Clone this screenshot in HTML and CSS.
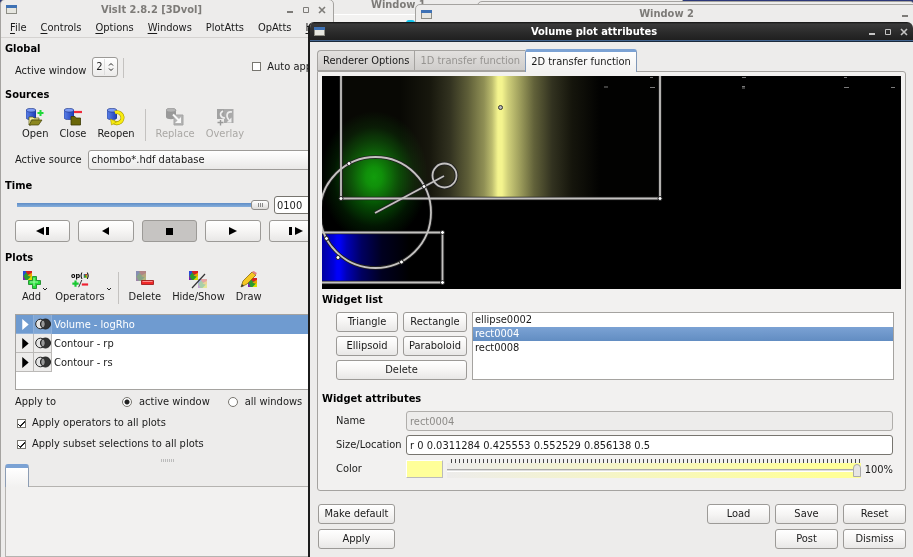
FILE: index.html
```html
<!DOCTYPE html>
<html lang="en">
<head>
	<meta charset="utf-8">
	<title>VisIt 2.8.2 [3Dvol]</title>
	<link rel="stylesheet" href="styles.css">
</head>
<body>
<!-- shared symbols -->
<svg class="defs" aria-hidden="true">
	<defs>
		<linearGradient id="blueCyl"><stop offset="0" stop-color="#5a80e8"/><stop offset="1" stop-color="#1c3cb8"/></linearGradient>
		<symbol id="cube" viewBox="0 0 10 10">
			<rect width="10" height="10" fill="#2a9a30"/>
			<path d="M0 0h5L0 6z" fill="#2848d8"/>
			<path d="M3 0h7v3L5 4z" fill="#d82020"/>
			<path d="M10 2v5L5 5z" fill="#f0a000"/>
			<path d="M10 5v5H5z" fill="#d8e000"/>
			<path d="M0 5l3 5H0z" fill="#7a20b0"/>
		</symbol>
		<symbol id="db" viewBox="0 0 10 12">
			<path d="M0 2v7.500c0 3 10 3 10 0V2z" fill="url(#blueCyl)" stroke="#1a2f80" stroke-width=".6"/>
			<ellipse cx="5" cy="2.200" rx="4.700" ry="1.900" fill="#7d9cf4" stroke="#1a2f80" stroke-width=".6"/>
		</symbol>
		<symbol id="win" viewBox="0 0 11 9">
			<rect x=".5" y=".5" width="10" height="8" fill="#e6e6e0" stroke="#8d8d85"/>
			<rect width="11" height="3" fill="#3f72b4"/>
		</symbol>
		<symbol id="minus" viewBox="0 0 8 8"><path d="M1 6h6" stroke="currentColor" stroke-width="2"/></symbol>
		<symbol id="square" viewBox="0 0 8 8"><path d="M1.500 1.500h5v5h-5z" fill="none" stroke="currentColor"/></symbol>
		<symbol id="cross" viewBox="0 0 8 8"><path d="M1 1l6 6m0-6l-6 6" stroke="currentColor" stroke-width="1.600"/></symbol>
		<symbol id="venn" viewBox="0 0 16 12">
			<circle cx="5.500" cy="6" r="4.800" fill="#e4e4e4" stroke="#222"/>
			<circle cx="10.500" cy="6" r="5" fill="#333" stroke="#222"/>
			<path d="M8 1.900a5 5 0 0 1 0 8.200a5 5 0 0 1 0-8.200z" fill="#999" stroke="#222" stroke-width=".6"/>
		</symbol>
	</defs>
</svg>

<div class="desktop">
	<div class="window win-one">
		<div class="titlebar"><h2>Window 1</h2></div>
		<div class="win-tools"><span class="chip"></span></div>
	</div>
	<div class="window win-back"></div>
	<div class="window win-two">
		<div class="titlebar">
			<svg class="win-icon"><use href="#win"/></svg>
			<h2>Window 2</h2>
			<button class="wb" aria-label="Minimize Window 2"><svg><use href="#minus"/></svg></button>
		</div>
	</div>

	<!-- main control window -->
	<main class="window main-win">
		<div class="titlebar">
			<svg class="win-icon"><use href="#win"/></svg>
			<h1>VisIt 2.8.2 [3Dvol]</h1>
			<div class="wbs">
				<button class="wb" aria-label="Minimize"><svg><use href="#minus"/></svg></button>
				<button class="wb" aria-label="Maximize"><svg><use href="#square"/></svg></button>
				<button class="wb" aria-label="Close"><svg><use href="#cross"/></svg></button>
			</div>
		</div>
		<nav class="menubar">
			<a href="#file"><u>F</u>ile</a>
			<a href="#controls"><u>C</u>ontrols</a>
			<a href="#options"><u>O</u>ptions</a>
			<a href="#windows"><u>W</u>indows</a>
			<a href="#plotatts">PlotAtts</a>
			<a href="#opatts">OpAtts</a>
			<a href="#help"><u>H</u>elp</a>
		</nav>

		<section class="group">
			<h3>Global</h3>
			<div class="global-row">
				<label for="activeWin" class="low">Active window</label>
				<span class="spin">
					<input id="activeWin" type="text" value="2">
					<svg viewBox="0 0 6 10"><path d="M1 3.500l2-2 2 2M1 6.500l2 2 2-2" fill="none" stroke="#222"/></svg>
				</span>
				<i class="vline"></i>
				<label class="check auto"><input type="checkbox">Auto apply</label>
			</div>
		</section>

		<section class="group">
			<h3>Sources</h3>
			<div class="toolbar">
				<button class="tool">
					<svg viewBox="0 0 18 18"><use href="#db" x="0" y="0" width="10" height="12"/>
						<path d="M3 9h4l1 1h5v2H5v5H3z" fill="#f3eda0" stroke="#55550a" stroke-width=".7"/>
						<path d="M3 17l3-5h10l-3.500 5z" fill="#8c8820" stroke="#44440a" stroke-width=".7"/>
						<path d="M14.500 2v6M11.500 5h6" stroke="#1fd83a" stroke-width="2"/></svg>
					Open
				</button>
				<button class="tool">
					<svg viewBox="0 0 18 18"><use href="#db" x="0" y="0" width="10" height="12"/>
						<path d="M7 8.500h4l1 1.500h4.500v7H7z" fill="#6b6708" stroke="#3c3a04" stroke-width=".8"/>
						<path d="M10 4h8" stroke="#f02a3a" stroke-width="2.200"/></svg>
					Close
				</button>
				<button class="tool">
					<svg viewBox="0 0 18 18"><use href="#db" x="0" y="0" width="10" height="12"/>
						<path d="M8 4.500a5.500 5.500 0 1 1-2 9" fill="none" stroke="#a89800" stroke-width="4"/>
						<path d="M8 4.500a5.500 5.500 0 1 1-2 9" fill="none" stroke="#f8ec10" stroke-width="2.800"/>
						<path d="M3.500 11l1 6 5-3z" fill="#f8ec10" stroke="#a89800" stroke-width=".6"/></svg>
					Reopen
				</button>
				<i class="vline"></i>
				<button class="tool" disabled>
					<svg viewBox="0 0 18 18"><path d="M0 2v7c0 3 10 3 10 0V2z" fill="#999"/><ellipse cx="5" cy="2.200" rx="5" ry="2" fill="#b4b4b4" stroke="#888" stroke-width=".6"/>
						<path d="M8 7h9v10H8z" fill="#b4b4b4" stroke="#a4a4a4"/>
						<path d="M7 6.500l6 6" stroke="#f8f8f8" stroke-width="2"/><path d="M15 9v6H9z" fill="#f8f8f8"/></svg>
					Replace
				</button>
				<button class="tool" disabled>
					<svg viewBox="0 0 18 18"><path d="M1 1h10v10H1z" fill="#a2a2a2"/><path d="M8 1h9.500v14H8z" fill="#aaa"/>
						<path d="M7 3c-4 2-3 7 2 7M16 4c-6-1-6 5-3 8" fill="none" stroke="#eee" stroke-width="1.600"/>
						<path d="M10.500 14.500h5v-5z" fill="#eee"/>
						<path d="M1.500 14.500h6M4.500 12v5.500" stroke="#999" stroke-width="1.400"/></svg>
					Overlay
				</button>
			</div>
			<div class="source-row">
				<label for="source">Active source</label>
				<select id="source"><option>chombo*.hdf database</option></select>
			</div>
		</section>

		<section class="group">
			<h3>Time</h3>
			<div class="time-row">
				<input class="time-slider" type="range" min="0" max="100" value="100" aria-label="Time slider">
				<input class="cycle" type="text" value="0100" aria-label="Cycle">
			</div>
			<div class="vcr">
				<button aria-label="Previous frame"><svg viewBox="0 0 16 10"><path d="M9 1v8L1 5zM11 1h3v8h-3z"/></svg></button>
				<button aria-label="Play backward"><svg viewBox="0 0 16 10"><path d="M11 1v8L4 5z"/></svg></button>
				<button class="on" aria-label="Stop"><svg viewBox="0 0 16 10"><path d="M5 2h7v7H5z"/></svg></button>
				<button aria-label="Play"><svg viewBox="0 0 16 10"><path d="M4 1v8l8-4z"/></svg></button>
				<button aria-label="Next frame"><svg viewBox="0 0 16 10"><path d="M1 1h3v8H1zM7 1v8l8-4z"/></svg></button>
			</div>
		</section>

		<section class="group">
			<h3>Plots</h3>
			<div class="toolbar">
				<button class="tool">
					<svg viewBox="0 0 18 18"><use href="#cube" width="9" height="9"/>
						<path d="M9.500 5.500h4v4h4v4h-4v4h-4v-4h-4v-4h4z" fill="#28e03c" stroke="#128020" stroke-width=".8"/><path d="M11 7v8M7 11h8" stroke="#a4f8a8"/></svg>
					Add
				</button>
				<svg class="drop" viewBox="0 0 6 4"><path d="M1 1l2 2 2-2" fill="none" stroke="#222"/></svg>
				<button class="tool">
					<svg viewBox="0 0 20 18"><text x="0" y="7" class="op">op(</text><use href="#cube" x="14" y="2" width="4" height="5"/><text x="17" y="7" class="op">)</text>
						<path d="M5 9.500v7M1.500 13h7" stroke="#19c832" stroke-width="2.400"/>
						<path d="M8.500 17l3.500-8" stroke="#222"/>
						<path d="M12 14h7" stroke="#f02030" stroke-width="2.400"/></svg>
					Operators
				</button>
				<svg class="drop" viewBox="0 0 6 4"><path d="M1 1l2 2 2-2" fill="none" stroke="#222"/></svg>
				<i class="vline"></i>
				<button class="tool">
					<svg viewBox="0 0 18 18"><use href="#cube" width="10" height="10" opacity=".45"/><path d="M0 0h10v10H0z" fill="#777" opacity=".45"/>
						<path d="M5.500 9.500h12v4h-12z" fill="#f02828" stroke="#981010" stroke-width=".8"/><path d="M6.500 10.500h10" stroke="#ff8a8a"/></svg>
					Delete
				</button>
				<button class="tool">
					<svg viewBox="0 0 18 18"><use href="#cube" width="9" height="9"/><use href="#cube" x="9" y="8" width="9" height="9" opacity=".35"/>
						<path d="M3 17L16 3" stroke="#333" stroke-width="1.200"/></svg>
					Hide/Show
				</button>
				<button class="tool">
					<svg viewBox="0 0 18 18"><use href="#cube" x="8" y="7" width="9" height="9"/>
						<path d="M1 16l2-6 9-9 4 3-9 9z" fill="#f6c822" stroke="#8a6a10" stroke-width=".8"/>
						<path d="M12 1l4 3 .8-2-3-2z" fill="#e88080"/><path d="M1 16l1-3 2 2z" fill="#333"/></svg>
					Draw
				</button>
			</div>
			<ul class="plots">
				<li class="sel"><button aria-label="Expand Volume"><svg viewBox="0 0 8 12"><path d="M1 0v12l7-6z"/></svg></button><span class="venn"><svg><use href="#venn"/></svg></span>Volume - logRho</li>
				<li><button aria-label="Expand Contour rp"><svg viewBox="0 0 8 12"><path d="M1 0v12l7-6z"/></svg></button><span class="venn"><svg><use href="#venn"/></svg></span>Contour - rp</li>
				<li><button aria-label="Expand Contour rs"><svg viewBox="0 0 8 12"><path d="M1 0v12l7-6z"/></svg></button><span class="venn"><svg><use href="#venn"/></svg></span>Contour - rs</li>
			</ul>
			<div class="apply">
				<div class="apply-to">
					<span>Apply to</span>
					<label class="check"><input type="radio" name="to" checked>active window</label>
					<label class="check"><input type="radio" name="to">all windows</label>
				</div>
				<label class="check"><input type="checkbox" checked>Apply operators to all plots</label>
				<label class="check"><input type="checkbox" checked>Apply subset selections to all plots</label>
			</div>
		</section>
		<div class="grip"></div>
		<div class="dock">
			<div class="dock-tab"></div>
			<div class="dock-pane"></div>
		</div>
	</main>

	<!-- volume plot attributes -->
	<div class="dialog" role="dialog" aria-labelledby="dlgTitle">
		<div class="titlebar dark">
			<svg class="win-icon"><use href="#win"/></svg>
			<h2 id="dlgTitle">Volume plot attributes</h2>
			<div class="wbs">
				<button class="wb" aria-label="Minimize"><svg><use href="#minus"/></svg></button>
				<button class="wb" aria-label="Maximize"><svg><use href="#square"/></svg></button>
				<button class="wb" aria-label="Close"><svg><use href="#cross"/></svg></button>
			</div>
		</div>
		<div class="dialog-body">
			<div class="tabs">
				<button>Renderer Options</button>
				<button disabled>1D transfer function</button>
				<button class="current">2D transfer function</button>
			</div>
			<div class="pane">
				<svg class="transfer" viewBox="322 76 579 213">
					<defs>
						<linearGradient id="yel" gradientUnits="userSpaceOnUse" x1="400" x2="600">
							<stop offset="0" stop-color="#080804"/>
							<stop offset=".15" stop-color="#17170d"/>
							<stop offset=".25" stop-color="#323220"/>
							<stop offset=".34" stop-color="#5e5e38"/>
							<stop offset=".42" stop-color="#909055"/>
							<stop offset=".46" stop-color="#bcbc6e"/>
							<stop offset=".49" stop-color="#f4f48e"/>
							<stop offset=".51" stop-color="#f4f48e"/>
							<stop offset=".54" stop-color="#d0d07a"/>
							<stop offset=".59" stop-color="#a6a661"/>
							<stop offset=".67" stop-color="#62623a"/>
							<stop offset=".76" stop-color="#323220"/>
							<stop offset=".86" stop-color="#15150c"/>
							<stop offset="1" stop-color="#020201"/>
						</linearGradient>
						<radialGradient id="grn">
							<stop offset="0" stop-color="#0a9a08"/>
							<stop offset=".15" stop-color="#088c06"/>
							<stop offset=".45" stop-color="#054a04"/>
							<stop offset=".75" stop-color="#021602"/>
							<stop offset="1" stop-color="#000"/>
						</radialGradient>
						<linearGradient id="blu" gradientUnits="userSpaceOnUse" x1="322" x2="410">
							<stop offset="0" stop-color="#0000a0"/>
							<stop offset=".13" stop-color="#0000d8"/>
							<stop offset=".17" stop-color="#0000fa"/>
							<stop offset=".2" stop-color="#0000fa"/>
							<stop offset=".28" stop-color="#0000b8"/>
							<stop offset=".45" stop-color="#000060"/>
							<stop offset=".68" stop-color="#000020"/>
							<stop offset="1" stop-color="#000"/>
						</linearGradient>
						<g id="outlines" fill="none">
							<path d="M341 70V198.500H660V70"/>
							<path d="M315 232.500H442.500V282.500H315"/>
							<circle cx="375.500" cy="212.500" r="55.500"/>
							<circle cx="444.500" cy="175.500" r="12"/>
							<path d="M375 213L444 176"/>
						</g>
					</defs>
					<rect x="322" y="76" width="579" height="213"/>
					<rect x="341" y="76" width="319" height="122" fill="url(#yel)"/>
					<ellipse class="glow" cx="374" cy="177" rx="54" ry="66" fill="url(#grn)"/>
					<rect x="322" y="233" width="120" height="50" fill="url(#blu)"/>
					<use href="#outlines" stroke="#222" stroke-width="3.600"/>
					<use href="#outlines" stroke="#c4c2c0" stroke-width="1.800"/>
					<g fill="#fff" stroke="#222">
						<circle cx="500.500" cy="107.500" r="2" fill="#bbb" stroke="#333"/>
						<circle cx="341" cy="198.500" r="2"/><circle cx="660" cy="198.500" r="2"/>
						<circle cx="349" cy="163.500" r="2"/><circle cx="424" cy="186.500" r="2"/>
						<circle cx="326.500" cy="238.500" r="2"/><circle cx="338" cy="257.500" r="2"/>
						<circle cx="401.500" cy="262" r="2"/>
						<circle cx="442.500" cy="232.500" r="2"/><circle cx="442.500" cy="282.500" r="2"/>
					</g>
					<path d="M604 87h4M650 87.500h5M650 77.500h3M742 86.500h3M742 88h3M742 77.500h4M844 87.500h5M844 77.500h3M891 87.500h4" stroke="#999" stroke-width=".8"/>
				</svg>

				<h3>Widget list</h3>
				<div class="widget-list">
					<div class="shape-btns">
						<button class="btn">Triangle</button>
						<button class="btn">Rectangle</button>
						<button class="btn">Ellipsoid</button>
						<button class="btn">Paraboloid</button>
						<button class="btn wide">Delete</button>
					</div>
					<ul class="listbox">
						<li>ellipse0002</li>
						<li class="sel">rect0004</li>
						<li>rect0008</li>
					</ul>
				</div>

				<h3 class="attrs-title">Widget attributes</h3>
				<div class="attrs">
					<label for="wname">Name</label>
					<input id="wname" type="text" value="rect0004" disabled>
					<label for="wsize">Size/Location</label>
					<input id="wsize" type="text" value="r 0 0.0311284 0.425553 0.552529 0.856138 0.5">
					<label for="wopacity">Color</label>
					<div class="color-row">
						<button class="swatch" aria-label="Widget color"></button>
						<div class="opacity">
							<div class="ticks"></div>
							<input id="wopacity" type="range" min="0" max="100" value="100">
						</div>
						<output for="wopacity">100%</output>
					</div>
				</div>
			</div>
			<div class="actions">
				<button class="btn">Make default</button>
				<span></span>
				<button class="btn">Load</button>
				<button class="btn">Save</button>
				<button class="btn">Reset</button>
				<button class="btn">Apply</button>
				<span class="span2"></span>
				<button class="btn">Post</button>
				<button class="btn">Dismiss</button>
			</div>
		</div>
	</div>
</div>
</body>
</html>
```
FILE: styles.css
```css
* {box-sizing: border-box;}
body {margin: 0; font: 11px/16px "DejaVu Sans Condensed", "DejaVu Sans", sans-serif; color: #1a1a1a;}
h1, h2, h3 {margin: 0; font-size: 11px; line-height: 16px; font-weight: bold;}
h3 {color: #000;}
ul {margin: 0; padding: 0; list-style: none;}
button, input, select {font: inherit; color: inherit; margin: 0;}
button {padding: 0;}
svg {display: block;}
.defs {position: absolute; width: 0; height: 0;}

.desktop {position: relative; min-height: 100vh; background: #2c3878; overflow: hidden;}
.window {position: absolute; background: #edeceb; border: 1px solid #a5a3a0; border-radius: 5px 5px 0 0;}
.titlebar {display: flex; align-items: center; height: 18px; color: #7d7b78;}
.titlebar h1, .titlebar h2 {flex: 1; text-align: center;}
.win-icon {width: 11px; height: 9px;}
.wbs {display: flex; gap: 8px;}
.wb {border: 0; background: none; color: inherit;}
.wb svg {width: 8px; height: 8px;}

.win-one {left: 300px; top: -5px; width: 383px; height: 60px;}
.win-one .titlebar {padding-left: 70px;}
.win-one .titlebar h2 {text-align: left;}
.win-tools {height: 30px; padding: 5px 0 0 105px; border-top: 1px solid #fff; background: #f3f2f1;}
.chip {display: block; width: 9px; height: 5px; border-radius: 3px 3px 0 0; background: #10c4ec;}
.win-back {left: 477px; top: 1px; right: -2px; height: 40px;}
.win-two {left: 415px; top: 4px; right: -5px; height: 40px;}
.win-two .titlebar {padding: 0 8px 0 5px;}

/* main window */
.main-win {left: 0; top: -1px; width: 334px; bottom: -1px; display: flex; flex-direction: column;}
.main-win .titlebar {height: 19px; padding: 0 7px 0 5px;}
.menubar {display: flex; gap: 14px; height: 19px; padding: 1px 0 0 9px; border-bottom: 1px solid #d5d3d1;}
.menubar a {color: inherit; text-decoration: none;}
.menubar u {text-underline-offset: 2px;}
.group {padding: 0 9px 0 4px; margin-bottom: 8px;}
.menubar + .group {margin-top: 3px;}
.global-row {display: flex; height: 22px; padding-left: 10px;}
.low {align-self: flex-end; margin-right: 6px;}
.spin {display: flex; align-items: center; width: 26px; height: 20px; border: 1px solid #9c9a97; border-radius: 3px; background: linear-gradient(#fff, #ecebea);}
.spin input {width: 12px; height: 16px; padding: 0 0 0 3px; border: 0; border-right: 1px solid #ddd; background: none;}
.spin svg {width: 6px; height: 10px; margin-left: 3px;}
.vline {width: 1px; margin: 1px 0; background: #c4c2c0;}
.global-row .vline {margin-left: 5px;}
.check {display: flex; align-items: center; gap: 6px; white-space: nowrap;}
.auto {margin: 0 0 3px 128px;}
input[type=checkbox], input[type=radio] {appearance: none; width: 9px; height: 9px; border: 1px solid #77756f; background: #fff;}
input[type=radio] {width: 10px; height: 10px; border-radius: 50%;}
input[type=radio]:checked {background: radial-gradient(circle, #222 0 2px, #fff 3px);}
input[type=checkbox]:checked {background: linear-gradient(45deg, transparent 25%, #222 26% 40%, transparent 41%) 0 3px/4px 4px no-repeat, linear-gradient(135deg, transparent 42%, #222 43% 60%, transparent 61%) 2px 0/6px 7px no-repeat, #fff;}

.toolbar {display: flex; gap: 11px; height: 40px; padding: 5px 0 0 17px;}
.tool {display: flex; flex-direction: column; align-items: center; border: 0; background: none; line-height: 16px; white-space: nowrap;}
.tool svg {width: 18px; height: 18px;}
.tool:disabled {color: #aaa8a5;}
.toolbar .vline {margin: 1px -1px 2px;}
.drop {width: 6px; height: 4px; margin: 16px -4px 0 -10px;}
.op {font: bold 8px "DejaVu Sans Condensed", sans-serif;}

.source-row {display: flex; align-items: center; gap: 6px; height: 20px; margin-top: 7px; padding-left: 10px;}
select {flex: 1; height: 20px; appearance: none; padding: 0 3px; border: 1px solid #9c9a97; border-radius: 3px; background: linear-gradient(#fff, #e9e8e7);}
.time-row {display: flex; align-items: center; gap: 5px; height: 20px; margin-top: 1px; padding-left: 12px;}
.time-slider {appearance: none; width: 252px; height: 10px; background: linear-gradient(#5f8dc6, #86aedb) center/100% 4px no-repeat;}
.time-slider::-webkit-slider-thumb {appearance: none; width: 18px; height: 10px; border: 1px solid #8d8b88; border-radius: 3px; background: repeating-linear-gradient(90deg, #888 0 1px, transparent 1px 2px) center/5px 4px no-repeat, linear-gradient(#fff, #dddbd9);}
.cycle {flex: 1; min-width: 0; height: 18px; padding: 0 2px; border: 1px solid #77756f; border-radius: 3px;}
.vcr {display: grid; grid-template-columns: repeat(5, 1fr); gap: 8px; margin-top: 5px; padding-left: 10px;}
.vcr button, .btn {border: 1px solid #9c9a97; border-radius: 3px; background: linear-gradient(#fff, #f6f5f4 50%, #e8e7e6);}
.vcr button {height: 22px;}
.vcr .on {background: #c6c4c2;}
.vcr svg {width: 16px; height: 10px; margin: auto;}

.plots {height: 76px; margin: 8px -9px 4px 10px; border: 1px solid #a5a3a0; background: #fff;}
.plots li {display: flex; align-items: center; height: 19px;}
.plots li button, .venn {display: flex; align-items: center; justify-content: center; width: 18px; height: 19px; border: solid #bbb9b7; border-width: 0 1px 1px 0; background: #edeceb;}
.venn {margin-right: 2px;}
.plots button svg {width: 8px; height: 11px;}
.venn svg {width: 16px; height: 12px;}
.plots .sel {background: #6f9bd0; color: #fff;}
.plots .sel button {background: none; border-color: #8fb0d9; fill: #fff;}
.plots .sel .venn {background: #7fa6d5; border-color: #8fb0d9;}
.apply {display: grid; gap: 5px; padding-left: 12px;}
.apply-to {display: flex; margin-left: -2px;}
.apply-to span {width: 107px;}
.apply-to .check {gap: 7px; margin-right: 18px;}
.grip {width: 13px; height: 3px; margin: -1px auto 2px; background: repeating-linear-gradient(90deg, #bbb 0 1px, transparent 1px 2px);}
.dock {flex: 1; display: flex; flex-direction: column; padding-left: 4px;}
.dock-tab {width: 24px; height: 23px; margin-bottom: -1px; border: 1px solid #8d9db4; border-top: 4px solid #7ba2d4; border-bottom: 0; border-radius: 3px 3px 0 0; background: linear-gradient(#fff, #f2f1f0); z-index: 1;}
.dock-pane {flex: 1; border: 1px solid #b5b3b0; background: #f2f1f0;}

/* dialog */
.dialog {position: absolute; left: 308px; right: 0; top: 22px; bottom: 0; border-left: 2px solid #1c1c1c; border-radius: 6px 6px 0 0; background: #edeceb; overflow: hidden;}
.titlebar.dark {height: 20px; padding: 0 5px 0 4px; color: #fff; background: linear-gradient(#111 0, #3a3a3a 2px, #292929 60%, #1e1e1e); border-bottom: 1px solid #1c2a3c; box-shadow: inset 0 -1px #42648f;}
.titlebar.dark h2 {padding-right: 5px;}
.dark .wb {color: #c4c4c4;}
.dialog-body {padding: 7px 7px 8px;}
.tabs {display: flex; align-items: flex-end; position: relative; z-index: 1;}
.tabs button {height: 21px; padding: 0 5px; border: 1px solid #a5a3a0; border-right-width: 0; background: linear-gradient(#e2e0de, #cfcdcb); white-space: nowrap;}
.tabs button:first-child {border-radius: 4px 0 0 0;}
.tabs button:disabled {color: #969491;}
.tabs .current {height: 23px; margin-bottom: -1px; border: 1px solid #8098b8; border-top: 3px solid #7ba2d4; border-bottom: 0; border-radius: 3px 3px 0 0; background: linear-gradient(#fff, #f2f1f0);}
.pane {padding: 4px 4px 12px; border: 1px solid #a5a3a0; border-radius: 0 3px 3px 3px; background: #f2f1f0;}
.transfer {width: 100%; height: auto;}
.glow {mix-blend-mode: screen;}
.transfer + h3 {margin-top: 3px;}
.widget-list {display: flex; gap: 5px; padding: 4px 7px 0 14px;}
.shape-btns {display: grid; grid-template-columns: 62px 64px; gap: 4px 5px;}
.btn {height: 20px;}
.wide {grid-column: span 2;}
.listbox {flex: 1; height: 68px; border: 1px solid #a5a3a0; background: #fff; line-height: 14px;}
.listbox li {padding: 0 2px;}
.listbox .sel {background: linear-gradient(#7ba2d4, #628dc2); color: #fff;}
.attrs-title {margin-top: 11px;}
.attrs {display: grid; grid-template-columns: 66px 1fr; align-items: center; gap: 4px; padding: 4px 8px 0 14px;}
.attrs input[type=text] {width: 100%; height: 20px; padding: 0 3px; border: 1px solid #77756f; border-radius: 3px; background: #fff;}
.attrs input[type=text]:disabled {border-color: #b0aeab; background: #edeceb; color: #8d8b88;}
.color-row {display: flex; align-items: flex-end; gap: 4px; height: 19px;}
.swatch {width: 37px; height: 18px; border: 1px solid; border-color: #fff #bbb #bbb #fff; background: #ffff99;}
.opacity {flex: 1;}
.ticks {height: 4px; margin: 0 0 0 4px; background: repeating-linear-gradient(90deg, #444 0 1px, transparent 1px 4px);}
.opacity input {display: block; appearance: none; width: 100%; height: 15px; background: linear-gradient(#aaa 0 1px, #ddd 1px 2px, #fff 2px 3px) center/100% 3px no-repeat, linear-gradient(90deg, #edeceb, #ffff99 90%);}
.opacity input::-webkit-slider-thumb {appearance: none; width: 8px; height: 13px; border: 1px solid #aaa; border-radius: 4px 4px 0 0; background: #e6e5e3;}
.actions {display: grid; grid-template-columns: 77px 1fr 63px 63px 63px; gap: 5px; margin: 13px 0 0 1px;}
.actions .span2 {grid-column: span 2;}
```
